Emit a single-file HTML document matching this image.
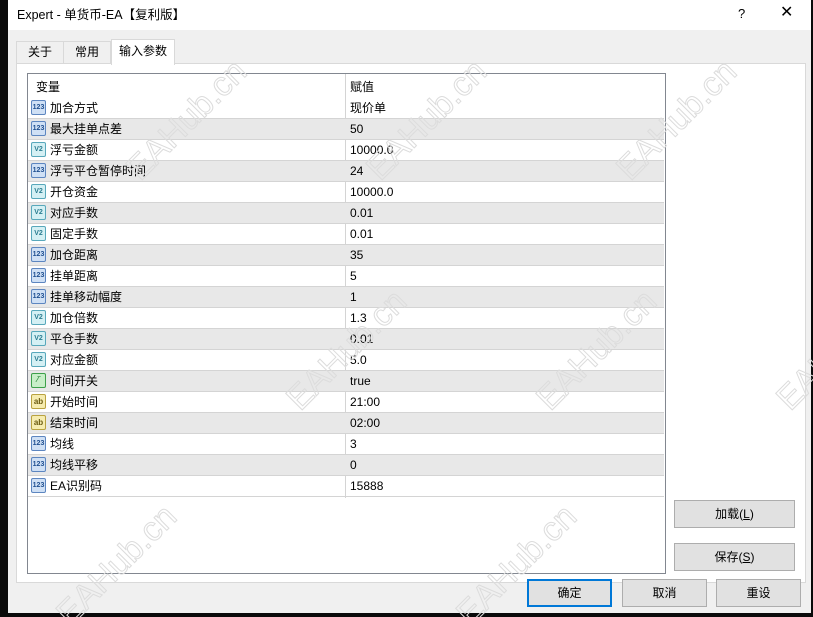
<!DOCTYPE html>
<html><head><meta charset="utf-8"><style>
*{margin:0;padding:0;box-sizing:border-box}
html,body{width:813px;height:617px;overflow:hidden}
body{background:#0a0a0a;position:relative;font-family:"Liberation Sans","Noto Sans CJK SC",sans-serif;font-size:12px;color:#000;line-height:16px}
.win{position:absolute;left:8px;top:0;width:803px;height:613px;background:#f0f0f0;overflow:hidden}
.title{position:absolute;left:0;top:0;width:803px;height:30px;background:#fff}
.title span{position:absolute;left:9px;top:7px;font-size:12.5px}
.q{position:absolute;left:730px;top:6px;font-size:13px}
.x{position:absolute;left:772px;top:5px;font-size:16px;font-weight:300}
.tab{position:absolute;top:41px;height:22px;border:1px solid #d9d9d9;border-bottom:none;background:#f0f0f0;padding:2px 0 0 0;text-align:center}
.panel{position:absolute;left:8px;top:63px;width:790px;height:520px;background:#fff;border:1px solid #d9d9d9}
.tbl{position:absolute;left:19px;top:73px;width:639px;height:501px;border:1px solid #828790;background:#fff;overflow:hidden}
.hdr{position:absolute;left:0;top:0;height:24px;width:100%}
.hdr span{position:absolute;top:5px}
.row{position:absolute;left:0;width:636px;height:21px;border-bottom:1px solid #d4d4d4}
.row.g{background:#e8e8e8}
.row .n{position:absolute;left:22px;top:2px}
.row .v{position:absolute;left:322px;top:2px}
.vl{position:absolute;left:317px;top:0;width:1px;height:424px;background:#d4d4d4}
.ic{position:absolute;left:3px;top:2px;width:15px;height:15px;border-radius:2px;font-size:7px;line-height:13px;text-align:center;font-weight:bold}
.i1{background:#cfe0f5;border:1px solid #5d86c0;color:#1f4f90}
.i2{background:#d4f0f4;border:1px solid #58a8bb;color:#2a7c90}
.i3{background:#c8eec8;border:1px solid #3ea04a;color:#1f8030}
.i4{background:#f6ecb0;border:1px solid #b9a240;color:#6a5a10;font-size:8px}
.btn{position:absolute;height:28px;border:1px solid #adadad;background:#e1e1e1;text-align:center;line-height:26px}
.wmc{position:absolute;left:0;top:0;width:813px;height:617px;overflow:hidden;pointer-events:none}
.wm{position:absolute;font-size:34px;line-height:40px;color:transparent;-webkit-text-stroke:1px #dcdcdc;transform:rotate(-45deg);font-family:"Liberation Sans",sans-serif;white-space:nowrap}
</style></head><body>
<div class="win">
<div class="title"><span>Expert - 单货币-EA【复利版】</span><div class="q">?</div><div class="x">✕</div></div>
<div class="tab" style="left:8px;width:48px">关于</div>
<div class="tab" style="left:55px;width:48px">常用</div>
<div class="panel"></div>
<div class="tab" style="left:103px;top:39px;width:64px;height:26px;background:#fff;z-index:2;padding-top:3px">输入参数</div>
<div class="tbl">
<div class="hdr"><span style="left:8px">变量</span><span style="left:322px">赋值</span></div>
<div class="vl"></div>
<div class="row" style="top:24px"><div class="ic i1">123</div><span class="n">加合方式</span><span class="v">现价单</span></div>
<div class="row g" style="top:45px"><div class="ic i1">123</div><span class="n">最大挂单点差</span><span class="v">50</span></div>
<div class="row" style="top:66px"><div class="ic i2">V2</div><span class="n">浮亏金额</span><span class="v">10000.0</span></div>
<div class="row g" style="top:87px"><div class="ic i1">123</div><span class="n">浮亏平仓暂停时间</span><span class="v">24</span></div>
<div class="row" style="top:108px"><div class="ic i2">V2</div><span class="n">开仓资金</span><span class="v">10000.0</span></div>
<div class="row g" style="top:129px"><div class="ic i2">V2</div><span class="n">对应手数</span><span class="v">0.01</span></div>
<div class="row" style="top:150px"><div class="ic i2">V2</div><span class="n">固定手数</span><span class="v">0.01</span></div>
<div class="row g" style="top:171px"><div class="ic i1">123</div><span class="n">加仓距离</span><span class="v">35</span></div>
<div class="row" style="top:192px"><div class="ic i1">123</div><span class="n">挂单距离</span><span class="v">5</span></div>
<div class="row g" style="top:213px"><div class="ic i1">123</div><span class="n">挂单移动幅度</span><span class="v">1</span></div>
<div class="row" style="top:234px"><div class="ic i2">V2</div><span class="n">加仓倍数</span><span class="v">1.3</span></div>
<div class="row g" style="top:255px"><div class="ic i2">V2</div><span class="n">平仓手数</span><span class="v">0.01</span></div>
<div class="row" style="top:276px"><div class="ic i2">V2</div><span class="n">对应金额</span><span class="v">5.0</span></div>
<div class="row g" style="top:297px"><div class="ic i3">⁄‾</div><span class="n">时间开关</span><span class="v">true</span></div>
<div class="row" style="top:318px"><div class="ic i4">ab</div><span class="n">开始时间</span><span class="v">21:00</span></div>
<div class="row g" style="top:339px"><div class="ic i4">ab</div><span class="n">结束时间</span><span class="v">02:00</span></div>
<div class="row" style="top:360px"><div class="ic i1">123</div><span class="n">均线</span><span class="v">3</span></div>
<div class="row g" style="top:381px"><div class="ic i1">123</div><span class="n">均线平移</span><span class="v">0</span></div>
<div class="row" style="top:402px"><div class="ic i1">123</div><span class="n">EA识别码</span><span class="v">15888</span></div>
</div>
<div class="btn" style="left:666px;top:500px;width:121px">加载(<u>L</u>)</div>
<div class="btn" style="left:666px;top:543px;width:121px">保存(<u>S</u>)</div>
<div class="btn" style="left:519px;top:579px;width:85px;border:2px solid #0078d7;line-height:24px">确定</div>
<div class="btn" style="left:614px;top:579px;width:85px">取消</div>
<div class="btn" style="left:708px;top:579px;width:85px">重设</div>
</div>
<div class="wmc">
<div class="wm" style="left:110px;top:100px">EAHub.cn</div>
<div class="wm" style="left:350px;top:100px">EAHub.cn</div>
<div class="wm" style="left:600px;top:100px">EAHub.cn</div>
<div class="wm" style="left:270px;top:330px">EAHub.cn</div>
<div class="wm" style="left:520px;top:330px">EAHub.cn</div>
<div class="wm" style="left:760px;top:330px">EAHub.cn</div>
<div class="wm" style="left:40px;top:545px">EAHub.cn</div>
<div class="wm" style="left:440px;top:545px">EAHub.cn</div>
</div>
</body></html>
